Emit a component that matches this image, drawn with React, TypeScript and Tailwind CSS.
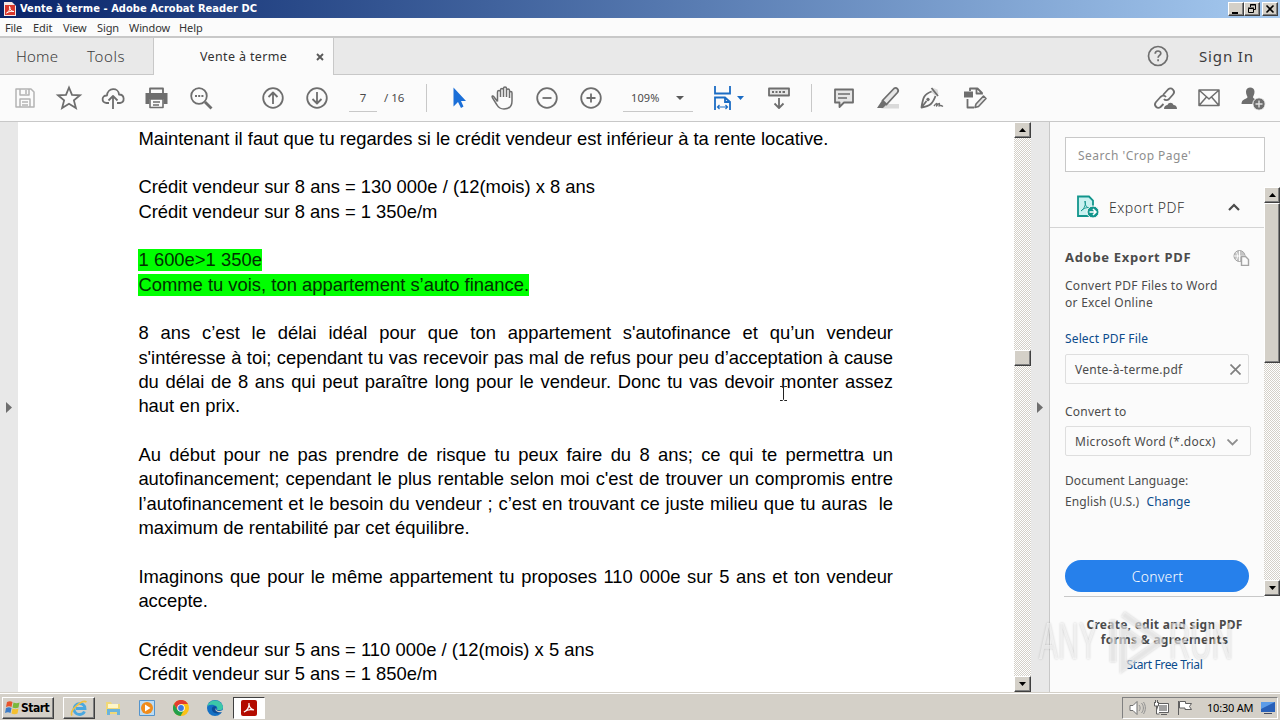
import type { ReactNode } from "react";
import clsx from "clsx";

const raised =
  "border border-t-white border-l-white border-r-[#404040] border-b-[#404040] bg-[#d4d0c8] shadow-[inset_-1px_-1px_0_#808080]";

const dither =
  "bg-[repeating-conic-gradient(#d4d0c8_0_25%,#ffffff_0_50%)] bg-[length:2px_2px]";

const menuItems = [
  { label: "File", className: "w-[28px]" },
  { label: "Edit", className: "w-[30px]" },
  { label: "View", className: "w-[34px]" },
  { label: "Sign", className: "w-[32px]" },
  { label: "Window", className: "w-[50px]" },
  { label: "Help", className: "w-[30px]" },
];

type Line = { text: string; width?: string; mark?: boolean };

const lines: Line[] = [
  { text: "Maintenant il faut que tu regardes si le crédit vendeur est inférieur à ta rente locative.", width: "w-[690px]" },
  { text: "" },
  { text: "Crédit vendeur sur 8 ans = 130 000e / (12(mois) x 8 ans", width: "w-[457px]" },
  { text: "Crédit vendeur sur 8 ans = 1 350e/m", width: "w-[299px]" },
  { text: "" },
  { text: "1 600e>1 350e", width: "w-[124px]", mark: true },
  { text: "Comme tu vois, ton appartement s’auto finance.", width: "w-[391px]", mark: true },
  { text: "" },
  { text: "8 ans c’est le délai idéal pour que ton appartement s'autofinance et qu’un vendeur", width: "w-[755px]" },
  { text: "s'intéresse à toi; cependant tu vas recevoir pas mal de refus pour peu d’acceptation à cause", width: "w-[755px]" },
  { text: "du délai de 8 ans qui peut paraître long pour le vendeur. Donc tu vas devoir monter assez", width: "w-[755px]" },
  { text: "haut en prix.", width: "w-[102px]" },
  { text: "" },
  { text: "Au début pour ne pas prendre de risque tu peux faire du 8 ans; ce qui te permettra un", width: "w-[755px]" },
  { text: "autofinancement; cependant le plus rentable selon moi c'est de trouver un compromis entre", width: "w-[755px]" },
  { text: "l’autofinancement et le besoin du vendeur ; c’est en trouvant ce juste milieu que tu auras \u00a0le", width: "w-[755px]" },
  { text: "maximum de rentabilité par cet équilibre.", width: "w-[331px]" },
  { text: "" },
  { text: "Imaginons que pour le même appartement tu proposes 110 000e sur 5 ans et ton vendeur", width: "w-[755px]" },
  { text: "accepte.", width: "w-[70px]" },
  { text: "" },
  { text: "Crédit vendeur sur 5 ans = 110 000e / (12(mois) x 5 ans", width: "w-[456px]" },
  { text: "Crédit vendeur sur 5 ans = 1 850e/m", width: "w-[299px]" },
];

function Icon({ children, className }: { children: ReactNode; className?: string }) {
  return (
    <div className={clsx("flex h-full w-11 shrink-0 items-center justify-center", className)}>
      <svg
        width="28"
        height="28"
        viewBox="0 0 28 28"
        fill="none"
        stroke="#6e6e6e"
        strokeWidth="1.8"
        strokeLinejoin="round"
      >
        {children}
      </svg>
    </div>
  );
}

function ScrollButton({ up }: { up?: boolean }) {
  return (
    <div className={clsx("flex h-4 w-full shrink-0 items-center justify-center", raised)}>
      <svg width="7" height="4" viewBox="0 0 7 4" fill="#000">
        <path d={up ? "M0 4 3.5 0 7 4z" : "M0 0h7L3.5 4z"} />
      </svg>
    </div>
  );
}

function TitleBar() {
  return (
    <div className="flex h-[18px] items-center bg-linear-to-r from-[#0a246a] to-[#a6caf0] pl-1 pr-[2px]">
      <svg width="12" height="14" viewBox="0 0 12 14">
        <path d="M0 0h8l4 4v10H0z" fill="#f6e8e6" />
        <path d="M1 3h10v10H1z" fill="#d8382c" />
        <path d="M2.500 11c3-2 4-4.500 3-6.500.2 3 1.500 5 4.500 5-3-.5-5 0-7.500 1.500z" fill="none" stroke="#fff" />
      </svg>
      <span className="ml-1 grow whitespace-nowrap text-[11px] font-bold tracking-[0.06px] text-white [font-family:'DejaVu_Sans_Condensed','DejaVu_Sans',sans-serif] [font-stretch:condensed]">
        Vente à terme - Adobe Acrobat Reader DC
      </span>
      <div className="flex">
        <div className={clsx("h-[14px] w-4", raised)}>
          <svg width="14" height="12" viewBox="0 0 14 12"><path d="M3 9h6v2H3z" /></svg>
        </div>
        <div className={clsx("h-[14px] w-4", raised)}>
          <svg width="14" height="12" viewBox="0 0 14 12" fill="none" stroke="#000">
            <path d="M5.500 4V1.500h5v5H9M5 2h6M3.500 5.500h5v4h-5zM3 5h6" />
          </svg>
        </div>
        <div className={clsx("ml-[2px] h-[14px] w-4", raised)}>
          <svg width="14" height="12" viewBox="0 0 14 12" stroke="#000" strokeWidth="1.600">
            <path d="M3.500 2.500l7 7M10.500 2.500l-7 7" />
          </svg>
        </div>
      </div>
    </div>
  );
}

function TabBar() {
  return (
    <div className="flex h-[37px] bg-[#e9e9e9] text-[#3c3c3c]">
      <div className="flex w-[154px] items-center border-r border-b border-[#c8c8c8] pl-4 text-[15px] font-light">
        <span className="w-[71px] tracking-[0.2px]">Home</span>
        <span className="tracking-[0.6px]">Tools</span>
      </div>
      <div className="flex w-[179px] items-center bg-[#fbfbfb] pt-px pl-[46px] text-[12.500px] tracking-[0.350px] text-[#323232]">
        <span className="w-[116px] whitespace-nowrap">Vente à terme</span>
        <svg width="8" height="8" viewBox="0 0 8 8" stroke="#5a5a5a" strokeWidth="1.900">
          <path d="M1 1l6 6M7 1L1 7" />
        </svg>
      </div>
      <div className="flex grow items-center border-b border-l border-[#c8c8c8] pl-[813px]">
        <svg className="mr-[30px]" width="22" height="22" viewBox="0 0 22 22" fill="none" stroke="#6e6e6e" strokeWidth="1.700">
          <circle cx="11" cy="11" r="9.500" />
          <path d="M8.200 8.700c0-3.600 5.600-3.500 5.600-.3 0 2-2.700 2-2.700 4.300M11.100 14.200v2" />
        </svg>
        <span className="whitespace-nowrap text-[15px] tracking-[0.850px] text-[#3c3c3c]">Sign In</span>
      </div>
    </div>
  );
}

function Toolbar() {
  return (
    <div className="flex h-[47px] items-center border-b border-[#c8c8c8] bg-[#fbfbfb] pl-[3px] text-[12px] text-[#4b4b4b]">
      <Icon>
        <g stroke="#b4b4b4">
          <path d="M5 5h15l3 3v15H5zM9 5v6h9V5M9 23v-8h10v8M15 6v4M11 18h6M11 21h6" strokeWidth="1.500" />
        </g>
      </Icon>
      <Icon>
        <path d="M14 3.500l3 7.300 8 .5-6.100 5.100 2 7.600-6.900-4.200L7.100 24l2-7.600L3 11.300l8-.5z" strokeLinejoin="miter" />
      </Icon>
      <Icon>
        <path d="M10 19H7.500C2 18.500 2.500 11 8 11.500 8.500 3.500 19.500 3 20 10.500c6 0 6 8 1 8.500h-3M14 25V13M9.500 16.500L14 12l4.500 4.500" />
      </Icon>
      <Icon>
        <path d="M7 9V4.500h13V9" />
        <path d="M2.500 9h22v11h-4v-5h-14v5h-4z" fill="#6e6e6e" stroke="none" />
        <path d="M7 15h13v8.500H7zM10 18h7M10 21h6" fill="#fbfbfb" strokeWidth="1.600" />
      </Icon>
      <Icon>
        <circle cx="12" cy="12" r="7.800" />
        <path d="M18 18l6.500 6.500" strokeWidth="2.800" />
        <path d="M8 12h2M11.200 12h2M14.400 12h2" />
      </Icon>
      <Icon className="ml-7">
        <circle cx="14" cy="14" r="9.800" />
        <path d="M14 20V9M9.500 13L14 8.500l4.500 4.500" />
      </Icon>
      <Icon>
        <circle cx="14" cy="14" r="9.800" />
        <path d="M14 8v11M9.500 15l4.500 4.500 4.500-4.500" />
      </Icon>
      <div className="ml-[10px] flex h-7 w-7 items-center justify-center border-b border-[#c8c8c8] pt-px text-[11.500px]">7</div>
      <span className="ml-[7px] w-[42px] whitespace-pre text-[11.500px]">/ 16</span>
      <div className="h-7 w-px bg-[#c8c8c8]" />
      <Icon className="ml-[11px]">
        <path d="M7.500 3.500v19l4.500-4.500 3 6 2.500-1.500-2.500-5.500h5z" fill="#1b6fd8" stroke="none" />
      </Icon>
      <Icon className="-ml-px">
        <path d="M8.500 17.500L5 13c-1-2-2.500-1-1.500.8L8 21c2 3.500 4 4 7 4 5.500 0 8-3 8-8V9c0-2-2.500-2-2.500 0v5M20.500 9V6.500c0-2-3-2-3 0V13M17.500 7V4.500c0-2-3-2-3 0V13M14.500 6c0-2-3-2-3 0v7M11.500 8c0-2-3-2-3 0v9.500" strokeWidth="1.500" />
      </Icon>
      <Icon>
        <circle cx="14" cy="14" r="9.800" />
        <path d="M9.500 14h9" />
      </Icon>
      <Icon>
        <circle cx="14" cy="14" r="9.800" />
        <path d="M9.500 14h9M14 9.500v9" />
      </Icon>
      <div className="ml-[10px] flex h-7 w-[70px] items-center justify-between border-b border-[#c8c8c8] pt-px pr-[9px] pl-2">
        <span className="text-[11px] tracking-[0.1px]">109%</span>
        <svg width="8" height="4" viewBox="0 0 8 4" fill="#5a5a5a"><path d="M0 0h8L4 4z" /></svg>
      </div>
      <div className="ml-5 flex w-8 items-center">
        <svg width="20" height="26" viewBox="0 0 20 26" fill="none" stroke="#1b6cc4" strokeWidth="1.800">
          <path d="M2 1v7.500h15V1M2 25V12.500h10l5 4.500v8M12 12.500V17h5" />
          <path d="M4.500 22h10M6.500 20l-2 2 2 2M12.500 20l2 2-2 2" strokeWidth="1.200" />
        </svg>
        <svg className="ml-1" width="7" height="4" viewBox="0 0 7 4" fill="#1b6cc4"><path d="M0 0h7L3.500 4z" /></svg>
      </div>
      <Icon className="ml-3">
        <path d="M4 4.500h20v7H4z" fill="#e6e6e6" />
        <path d="M7 8h2M10.500 8h2M14 8h2M17.500 8h2.500M14 14v10M9.500 19.500L14 24l4.500-4.500" />
      </Icon>
      <div className="ml-[10px] h-7 w-px bg-[#c8c8c8]" />
      <Icon className="ml-[10px]">
        <path d="M5 5.500h18v13h-9L9.500 23v-4.500H5z" fill="#e6e6e6" />
        <path d="M8 10h12M8 14h9" strokeWidth="1.400" />
      </Icon>
      <Icon>
        <path d="M12 20h13v4.500H7z" fill="#dadada" stroke="none" />
        <path d="M20 4.500L8.500 16.500l4 4L23.500 8.500c2-2.500-1-6-3.500-4z" fill="#e6e6e6" />
        <path d="M8 16.500L3 24h6l3.500-3.500z" fill="#6e6e6e" stroke="none" />
      </Icon>
      <Icon className="-ml-px">
        <path d="M16.500 4l4 1.500 1 4.500-3.500 1.500-4.500-4z" fill="#dadada" stroke="none" />
        <path d="M14.500 4l6.500 8M14.500 7.500C7 10.500 6 13 4.500 23.500 13 22 15.500 20 18.500 12M4.500 23.500l5-6.500" />
        <circle cx="11" cy="15.500" r="1.300" fill="#6e6e6e" strokeWidth="1" />
        <path d="M17 22c3-4 3.500-3 2.500 0 3-4 3.500-3 2.500 0 1.500-1 2.500-.5 4 .5" strokeWidth="1.400" />
      </Icon>
      <Icon>
        <path d="M3 7.500h9v6H3z" fill="#6e6e6e" stroke="none" />
        <path d="M9 7V4.500h7.500L21 9v1.500M15.500 4.500V9.500H21M6.500 15v8.500H13" />
        <path d="M15 20l7.500-8 2.500 2.500-7.500 8-3.500 1z" fill="#e6e6e6" strokeWidth="1.600" />
      </Icon>
      <Icon className="ml-[146px]">
        <path d="M12 11l5-5.500c3.500-3 8 1.500 5 5l-4 4.500c-1.500 1.500-4 1.500-5 0M15 13c-1.500-2-4-1.500-5.500 0L5 18c-3 3.500 1.500 7.500 4.500 5l3-3" />
        <path d="M13 25c0-3 2-4 3.500-4 1-3 5-3 6 0 2 0 3.500 1.500 3.500 4z" fill="#6e6e6e" stroke="none" />
      </Icon>
      <Icon>
        <path d="M4 6h20v15.500H4zM4.500 6.500l9.500 8.500 9.500-8.500M4.500 21l7-8M23.500 21l-7-8" strokeWidth="1.500" />
      </Icon>
      <Icon>
        <path d="M7 7.500c0-5.500 8.500-5.500 8.500 0 0 3-1 4-1.500 5.500 0 2 4.500 1.500 4.500 7H2.500c0-5.500 6-5 6-7C8 11.500 7 10.500 7 7.500z" fill="#6e6e6e" stroke="none" />
        <circle cx="20" cy="20" r="6.200" fill="#6e6e6e" stroke="#fbfbfb" strokeWidth="1" />
        <path d="M16.500 20h7M20 16.500v7" stroke="#e0e0e0" strokeWidth="1.400" />
      </Icon>
    </div>
  );
}

function Document() {
  return (
    <div className="relative w-[996px] shrink-0 overflow-hidden bg-white pt-[4.500px] pl-[120px] text-[18.400px] leading-[24.350px] whitespace-nowrap text-black [font-family:'Liberation_Sans',Arial,sans-serif]">
      {lines.map(({ text, width, mark }, i) => (
        <p key={i} className="flex h-[24.350px] items-center">
          <span
            className={clsx(
              "block h-[22px] pl-[0.400px] leading-[22px] [text-align-last:justify]",
              width,
              mark && "bg-[#00ff00] text-[#003000]",
            )}
          >
            {text}
          </span>
        </p>
      ))}
      <svg className="absolute top-[263px] left-[761px]" width="9" height="17" viewBox="0 0 9 17" fill="none" stroke="#222">
        <path d="M1 1.500h2.500l1 1 1-1H8M4.500 2v12M1 15.500h2.500l1-1 1 1H8" />
      </svg>
    </div>
  );
}

function SidePanel() {
  return (
    <aside className="flex w-[231px] shrink-0 flex-col border-l border-[#c8c8c8] bg-[#fbfbfb] text-[12px] text-[#4b4b4b]">
      <div className="mt-[15px] ml-[15px] flex h-[35px] w-[200px] shrink-0 items-center border border-[#c8c8c8] bg-white pt-[2px] pl-3 tracking-[0.480px] text-[#8e8e8e]">
        Search 'Crop Page'
      </div>
      <div className="mt-[15px] flex h-[409px] shrink-0">
        <div className="flex w-[214px] flex-col">
          <div className="flex h-[41px] shrink-0 items-center border-b border-[#d4d4d4] pl-[26px]">
            <svg width="24" height="24" viewBox="0 0 24 24" fill="none" stroke="#12958c" strokeWidth="1.800">
              <path d="M2 1.500h11l4 4V21H2z" fill="#c9f1f0" />
              <path d="M5 16c4-3 5-7 4-10 0 5 2 7 5 7-3-1-6 0-9 3z" strokeWidth="1" />
              <circle cx="17" cy="17" r="6" fill="#12958c" stroke="#fbfbfb" strokeWidth="1" />
              <path d="M13.500 17h6M17 14l3 3-3 3" stroke="#fff" strokeWidth="1.500" />
            </svg>
            <span className="ml-[9px] w-[119px] text-[14px] font-light tracking-[0.5px] text-[#323232]">Export PDF</span>
            <svg width="12" height="8" viewBox="0 0 12 8" fill="none" stroke="#4b4b4b" strokeWidth="2.200">
              <path d="M1 7l5-5 5 5" />
            </svg>
          </div>
          <div className="flex flex-col pl-[15px]">
            <div className="mt-[20px] flex h-5 items-center">
              <span className="w-[168px] text-[13px] font-bold tracking-[0.680px]">Adobe Export PDF</span>
              <svg width="17" height="16" viewBox="0 0 17 16" fill="none" stroke="#a4a4a4">
                <circle cx="6.500" cy="6" r="5.500" fill="#c4c4c4" />
                <path d="M1 6h11M6.500 1v10M3 2c2 2 2 6 0 8" stroke="#fbfbfb" />
                <path d="M8.500 6.500h4l3 3v6h-7z" fill="#fbfbfb" strokeWidth="1.400" />
              </svg>
            </div>
            <p className="mt-[9px] leading-[17px] tracking-[0.270px]">
              Convert PDF Files to Word
              <br />
              or Excel Online
            </p>
            <span className="mt-[19px] h-[18px] leading-[18px] tracking-[0.140px] text-[#0b4c8c]">Select PDF File</span>
            <div className="mt-[6px] flex h-[30px] w-[184px] items-center rounded-xs border border-[#dedede] pt-px pl-[9px]">
              <span className="w-[155px] tracking-[0.270px]">Vente-à-terme.pdf</span>
              <svg width="11" height="11" viewBox="0 0 11 11" stroke="#808080" strokeWidth="1.700">
                <path d="M.5.500l10 10M10.500.500l-10 10" />
              </svg>
            </div>
            <span className="mt-[19px] h-[18px] leading-[18px] tracking-[0.250px]">Convert to</span>
            <div className="mt-[5px] flex h-[30px] w-[186px] items-center rounded-xs border border-[#dedede] pt-[2px] pl-[9px]">
              <span className="w-[152px] whitespace-nowrap tracking-[0.310px]">Microsoft Word (*.docx)</span>
              <svg width="11" height="7" viewBox="0 0 11 7" fill="none" stroke="#8e8e8e" strokeWidth="1.800">
                <path d="M.5.500l5 5 5-5" />
              </svg>
            </div>
            <p className="mt-[14px] leading-[21px] tracking-[0.110px]">
              Document Language:
              <br />
              English (U.S.) <span className="ml-1 text-[#0b4c8c]">Change</span>
            </p>
            <div className="mt-12 flex h-8 w-[184px] items-center justify-center rounded-full bg-[#2680eb] pl-px text-[14px] font-light tracking-[0.2px] text-white">
              Convert
            </div>
          </div>
        </div>
        <div className={clsx("flex w-4 flex-col justify-between", dither)}>
          <div>
            <ScrollButton up />
            <div className={clsx("h-[160px]", raised)} />
          </div>
          <ScrollButton />
        </div>
      </div>
      <div className="ml-[14px] w-[200px] border-t border-[#c8c8c8]" />
      <div className="mt-5 flex w-[229px] flex-col items-center leading-[15px]">
        <p className="text-center font-bold tracking-[0.270px]">
          Create, edit and sign PDF
          <br />
          forms &amp; agreements
        </p>
        <span className="mt-[10px] tracking-[-0.350px] text-[#0b4c8c]">Start Free Trial</span>
      </div>
    </aside>
  );
}

function Taskbar() {
  return (
    <div className="flex h-7 items-center border-t border-[#d4d0c8] bg-[#d4d0c8] pl-[2px] text-[11px] text-black shadow-[inset_0_1px_0_#fff]">
      <div className={clsx("mt-[3px] flex h-[22px] w-[52px] items-center pl-[2px]", raised)}>
        <svg width="15" height="14" viewBox="0 0 15 14">
          <path d="M2 1c2-1 4-1 5.500 0L6.500 6C5 5 3 5 1 6z" fill="#e8542c" />
          <path d="M8.500 1.500c2 1 4 1 6 0l-1 5c-2 1-4 1-6 0z" fill="#7ab83c" />
          <path d="M1 7c2-1 4-1 5.500 0l-1 5C4 11 2 11 0 12z" fill="#3c7cc8" />
          <path d="M7.500 7.500c2 1 4 1 6 0l-1 5c-2 1-4 1-6 0z" fill="#f4c030" />
        </svg>
        <span className="ml-px text-[12px] font-bold tracking-[-0.5px] [font-family:'DejaVu_Sans_Condensed','DejaVu_Sans',sans-serif] [font-stretch:condensed]">Start</span>
      </div>
      <div className={clsx("mt-[3px] ml-[9px] flex h-[22px] w-8 items-center justify-center", raised)}>
        <svg width="18" height="17" viewBox="0 0 18 17" fill="none">
          <path d="M14.500 11.500c-2 4.500-10 4-10.500-2.500C4 2.500 14.500 1.500 15 8.500H6" stroke="#4aa8e0" strokeWidth="2.800" />
          <path d="M2 15.500C-1 11 12-1 16.500 2" stroke="#f0c040" strokeWidth="1.600" />
        </svg>
      </div>
      <svg className="mt-[3px] ml-[10px]" width="17" height="17" viewBox="0 0 17 17">
        <path d="M1 2h5l1 2h8v10H1z" fill="#f0d878" />
        <path d="M3 4h10v4H3z" fill="#fff6c8" />
        <path d="M2 15V9h13v6h-3v-3H5v3z" fill="#6cb4dc" />
      </svg>
      <svg className="mt-[3px] ml-[17px]" width="16" height="16" viewBox="0 0 16 16">
        <path d="M.5.500h15v15H.5z" fill="#bcdcf4" stroke="#5494cc" />
        <circle cx="8" cy="8" r="6" fill="#f08c1c" />
        <path d="M6 4.500v7L11.500 8z" fill="#fff" />
      </svg>
      <svg className="mt-[3px] ml-[18px]" width="16" height="16" viewBox="0 0 16 16">
        <circle cx="8" cy="8" r="8" fill="#fbc116" />
        <path d="M1 4a8 8 0 0 1 14 0H8L4.500 10z" fill="#e33b2e" />
        <path d="M1 4a8 8 0 0 0 6.500 12L11 10H4.500z" fill="#22a04b" />
        <circle cx="8" cy="8" r="3.800" fill="#fff" />
        <circle cx="8" cy="8" r="2.900" fill="#3b78e0" />
      </svg>
      <svg className="mt-[3px] ml-[18px]" width="16" height="16" viewBox="0 0 16 16">
        <circle cx="8" cy="8" r="8" fill="#1470c4" />
        <path d="M.5 6C2-1 14-2 16 7c0 3-3 4-6 3 2-4-5-7-9.500-4z" fill="#3cc8a8" />
        <path d="M5 8c-1 4 4 7 9 4.500C17 12 14 10 10 10 8 10 9 7 10 7c-2-1.500-4-1-5 1z" fill="#0c4c98" />
        <path d="M9 8c-.5 3 3 4 7 2v2c-5 1-9-1-7-4z" fill="#d4d0c8" />
      </svg>
      <div className="mt-[3px] ml-[10px] flex h-[22px] w-8 items-center justify-center border border-t-[#404040] border-r-white border-b-white border-l-[#404040] bg-white">
        <svg width="16" height="16" viewBox="0 0 16 16">
          <rect width="16" height="16" rx="2" fill="#b30b00" />
          <path d="M3 12c3-1 5.500-5 5-9C7.500 6 9.500 9.500 13 10c-3-.8-7-.5-10 2z" fill="none" stroke="#fff" strokeWidth="1.200" />
        </svg>
      </div>
      <div className="grow" />
      <div className="mt-[3px] mr-[2px] flex h-[22px] w-[156px] items-center border border-t-[#808080] border-r-white border-b-white border-l-[#808080] pl-[6px]">
        <svg width="17" height="16" viewBox="0 0 17 16" fill="#fff" stroke="#707070">
          <path d="M1 5.500h3l4-4v13l-4-4H1z" />
          <path d="M10 5c1.500 2 1.500 4 0 6M12.500 3c2.500 3 2.500 7 0 10M14.500 2c2.500 4 2.500 8 0 12" fill="none" stroke="#909090" />
        </svg>
        <svg className="ml-[7px]" width="17" height="16" viewBox="0 0 17 16" fill="#fff" stroke="#606060">
          <path d="M4.500 3.500h11v9h-11zM8 14.500h6" />
          <path d="M6 5h8v6H6z" fill="#a0a0a0" stroke="none" />
          <path d="M1.500 2v4h4V2M3.500 6v8h3M2.500 0v3M4.500 0v3" />
        </svg>
        <svg className="ml-[7px]" width="16" height="16" viewBox="0 0 16 16" fill="#fff" stroke="#606060">
          <path d="M1.500 1v14M2.500 1.500h6v2h6l-2 3 2 3H8V8H2.500z" />
        </svg>
        <span className="ml-[14px] w-[53px] whitespace-nowrap tracking-[-0.2px]">10:30 AM</span>
        <svg width="16" height="14" viewBox="0 0 16 14">
          <path d="M1 1h14v10H1z" fill="#2860b8" />
          <path d="M1 1h14L1 8z" fill="#5c9ce8" />
          <path d="M4 12h8v1H4z" fill="#404860" />
        </svg>
      </div>
    </div>
  );
}

function Watermark() {
  return (
    <div className="pointer-events-none absolute top-[606px] left-[1039px] flex h-[70px] w-[200px] items-center text-[51px] leading-none text-white/60 [font-family:'Liberation_Sans',sans-serif] [text-shadow:0_0_3px_rgba(0,0,0,0.2)]">
      <span className="w-[60px] origin-left scale-x-[0.560]">ANY</span>
      <svg className="ml-2 shrink-0" width="60" height="66" viewBox="0 0 60 66" fill="none" stroke="#fff" strokeOpacity="0.450" strokeWidth="6" filter="drop-shadow(0 0 1px #999)">
        <path d="M6 12v42M16 6l38 27-38 27V21l17 12-9 7" />
      </svg>
      <span className="ml-[2px] w-[64px] origin-left scale-x-[0.580]">RUN</span>
    </div>
  );
}

export default function App() {
  return (
    <div className="relative flex h-[720px] w-[1280px] flex-col overflow-hidden bg-white [font-family:'Noto_Sans','Open_Sans',sans-serif]">
      <TitleBar />
      <div className="flex h-5 items-center border-b-2 border-[#c8c8c8] bg-[#fbfbfb] pt-[2px] pl-[5px] text-[11px] tracking-[-0.1px] text-[#333]">
        {menuItems.map(({ label, className }) => (
          <span key={label} className={className}>
            {label}
          </span>
        ))}
      </div>
      <TabBar />
      <Toolbar />
      <main className="flex h-[570px]">
        <div className="flex w-[18px] shrink-0 items-center justify-center bg-[#e8e8e8]">
          <svg width="6" height="11" viewBox="0 0 6 11" fill="#6e6e6e"><path d="M0 0l6 5.500L0 11z" /></svg>
        </div>
        <Document />
        <div className={clsx("flex w-[17px] shrink-0 flex-col", dither)}>
          <ScrollButton up />
          <div className={clsx("mt-[212px] mb-auto h-4", raised)} />
          <ScrollButton />
        </div>
        <div className="flex w-[18px] shrink-0 items-center justify-center bg-[#e8e8e8]">
          <svg width="6" height="11" viewBox="0 0 6 11" fill="#6e6e6e"><path d="M0 0l6 5.500L0 11z" /></svg>
        </div>
        <SidePanel />
      </main>
      <Taskbar />
      <Watermark />
    </div>
  );
}
